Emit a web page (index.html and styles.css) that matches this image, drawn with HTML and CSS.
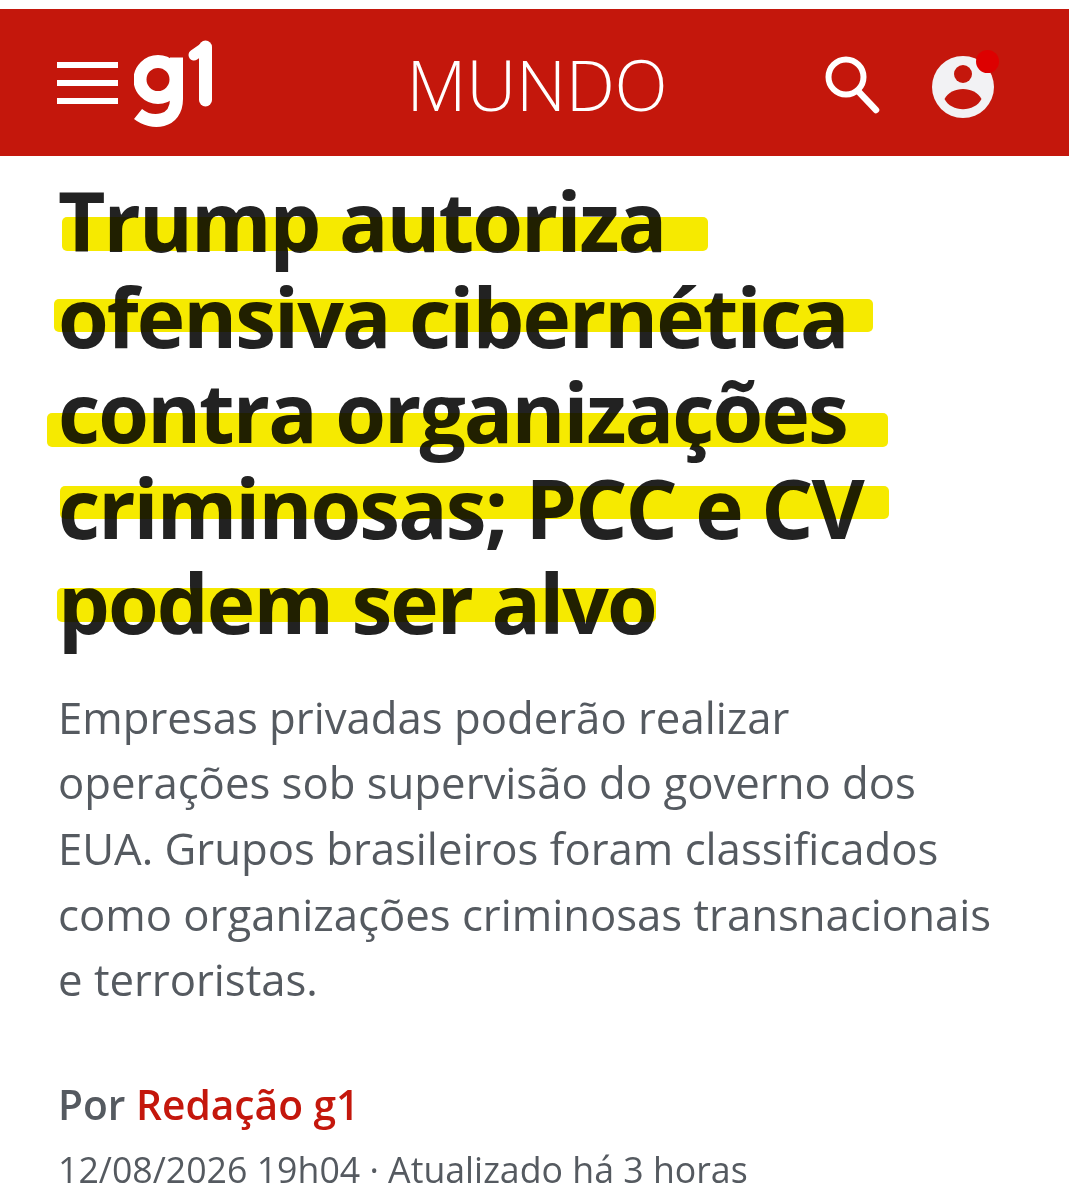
FILE: index.html
```html
<!DOCTYPE html>
<html lang="pt-BR">
<head>
    <meta charset="UTF-8">
    <title>Trump autoriza ofensiva cibernética - g1</title>
    <link rel="stylesheet" href="styles.css">
</head>
<body>

    <header class="topbar">
        <div class="topbar-left">
            <div class="menu-icon"><span></span><span></span><span></span></div>
            <svg class="logo" viewBox="0 0 84 92" aria-label="g1">
                <g fill="none" stroke="#fff" stroke-width="13">
                    <circle cx="24" cy="42.5" r="18"/>
                    <path d="M42.5 20.5 V62 C42.5 86 18 88 4 77"/>
                    <path d="M71.5 10 V63" stroke-linecap="round"/>
                    <path d="M71.5 10 L60 18" stroke-width="11" stroke-linecap="round"/>
                </g>
            </svg>
        </div>
        <div class="section-name">MUNDO</div>
        <div class="topbar-right">
            <svg class="search-icon" viewBox="0 0 56 62">
                <circle cx="22" cy="22" r="17.5" fill="none" stroke="#fff" stroke-width="6"/>
                <path d="M34 36 L52 55" stroke="#fff" stroke-width="6.5" stroke-linecap="round"/>
            </svg>
            <svg class="user-icon" viewBox="0 0 72 72">
                <circle cx="32" cy="41" r="31" fill="#f2f2f4"/>
                <circle cx="32" cy="28" r="9" fill="#c4170c"/>
                <path d="M13.5 53 C20 39.5 44 39.5 50.5 53 C44 66.5 20 66.5 13.5 53 Z" fill="#c4170c"/>
                <circle cx="56.5" cy="15.5" r="11.5" fill="#dd0000"/>
            </svg>
        </div>
    </header>

    <main class="article">
        <h1 class="headline">
            <span class="line">Trump autoriza</span>
            <span class="line">ofensiva cibernética</span>
            <span class="line">contra organizações</span>
            <span class="line">criminosas; PCC e CV</span>
            <span class="line">podem ser alvo</span>
        </h1>
        <p class="subtitle">Empresas privadas poderão realizar operações sob supervisão do governo dos EUA. Grupos brasileiros foram classificados como organizações criminosas transnacionais e terroristas.</p>
        <p class="byline">Por <a href="#">Redação g1</a></p>
        <p class="dateline">12/08/2026 19h04 · Atualizado há 3 horas</p>
    </main>

</body>
</html>
```
FILE: styles.css
```css
body {
    margin: 0;
    padding-top: 9px;
    background: #fff;
    font-family: "Open Sans", Arial, sans-serif;
    overflow: hidden;
}
.topbar {
    height: 147px;
    background: #c4170c;
    display: grid;
    grid-template-columns: 1fr auto 1fr;
    align-items: center;
    padding: 0 52px 0 57px;
    color: #fff;
}
.topbar-left {
    display: flex;
    align-items: center;
    gap: 16px;
}
.menu-icon {
    display: flex;
    flex-direction: column;
    gap: 12px;
    width: 61px;
}
.menu-icon span {
    height: 6px;
    background: #fff;
}
.logo {
    width: 84px;
    height: 92px;
}
.section-name {
    padding-top: 2px;
    font-size: 69.5px;
    font-weight: 300;
    letter-spacing: -0.3px;
}
.topbar-right {
    display: flex;
    justify-content: flex-end;
    align-items: center;
    gap: 51px;
    padding-right: 14px;
}
.search-icon {
    width: 56px;
    height: 62px;
    margin-top: 6px;
}
.user-icon {
    width: 72px;
    height: 72px;
    margin-top: -2px;
}
.article {
    padding: 0 58px;
}
.headline {
    margin: 17px 0 0;
    font-size: 82px;
    line-height: 95.5px;
    font-weight: 700;
    letter-spacing: -1.9px;
    color: #222;
}
.line {
    display: block;
    position: relative;
    white-space: nowrap;
}
/* marker strokes, each one hand drawn at a different place */
.line::before {
    content: '';
    position: absolute;
    height: 33.5px;
    top: 44px;
    left: 4px;
    width: 646px;
    background: #f6ea00;
    border-radius: 5px;
    mix-blend-mode: multiply;
}
.line:nth-child(2)::before { left: -4px; width: 819px; top: 30px; }
.line:nth-child(3)::before { left: -11px; width: 841px; top: 49px; }
.line:nth-child(4)::before { left: 2px; width: 829px; top: 26px; }
.line:nth-child(5)::before { left: -1px; width: 599px; top: 33px; }
.subtitle {
    margin: 34px 0 0;
    font-size: 43.7px;
    line-height: 65.7px;
    color: #555a60;
}
.byline {
    margin: 63.5px 0 0;
    font-size: 40.7px;
    line-height: 54px;
    font-weight: 600;
    color: #555a60;
}
.byline a {
    color: #c4170c;
    text-decoration: none;
}
.dateline {
    margin: 14px 0 0;
    font-size: 35.7px;
    line-height: 48px;
    color: #555a60;
}
```
